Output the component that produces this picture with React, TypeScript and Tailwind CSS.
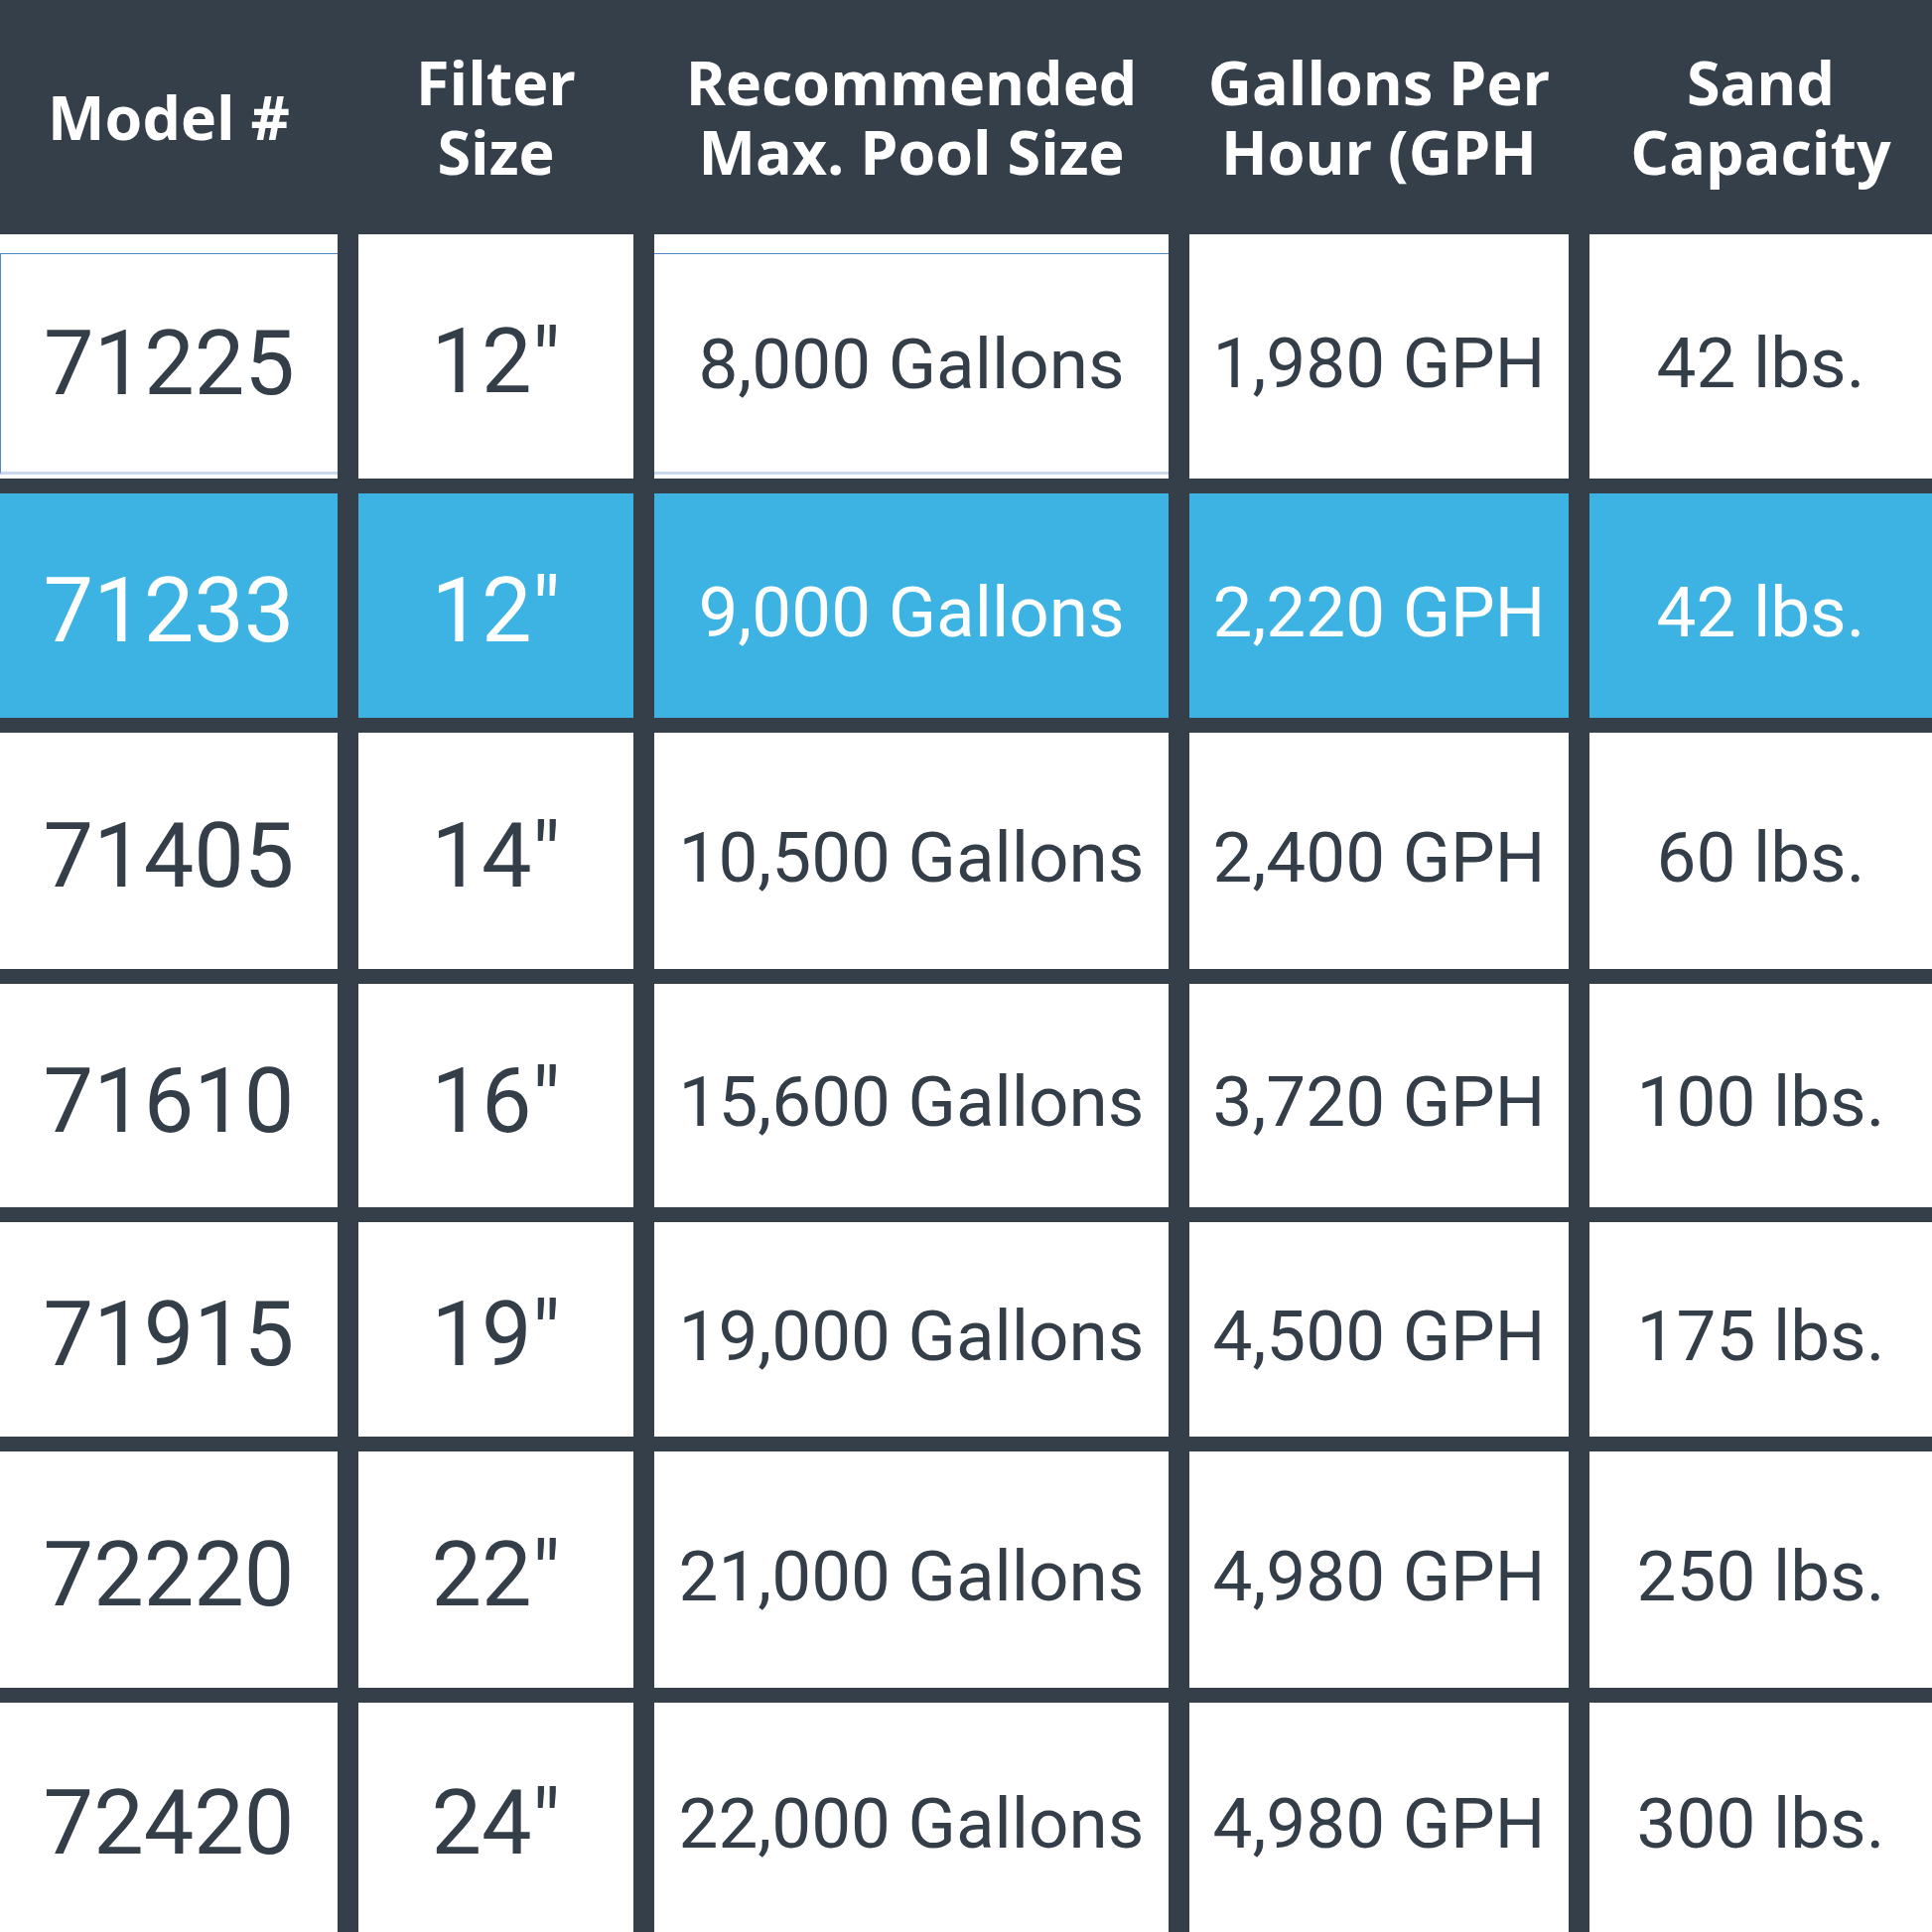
import React from "react";

type Row = { model: string; size: string; pool: string; gph: string; sand: string; hl?: boolean };

const rows: Row[] = [
  { model: "71225", size: "12\"", pool: "8,000 Gallons", gph: "1,980 GPH", sand: "42 lbs." },
  { model: "71233", size: "12\"", pool: "9,000 Gallons", gph: "2,220 GPH", sand: "42 lbs.", hl: true },
  { model: "71405", size: "14\"", pool: "10,500 Gallons", gph: "2,400 GPH", sand: "60 lbs." },
  { model: "71610", size: "16\"", pool: "15,600 Gallons", gph: "3,720 GPH", sand: "100 lbs." },
  { model: "71915", size: "19\"", pool: "19,000 Gallons", gph: "4,500 GPH", sand: "175 lbs." },
  { model: "72220", size: "22\"", pool: "21,000 Gallons", gph: "4,980 GPH", sand: "250 lbs." },
  { model: "72420", size: "24\"", pool: "22,000 Gallons", gph: "4,980 GPH", sand: "300 lbs." },
];

const valFont = { fontFamily: "Roboto, 'Noto Sans', sans-serif" };
const headFont = { fontFamily: "'Open Sans', 'Noto Sans', sans-serif" };

function Cell({ children, hl, big, extra }: { children: React.ReactNode; hl?: boolean; big?: boolean; extra?: string }) {
  return (
    <div className={`flex items-center justify-center ${hl ? "bg-[#3db3e4] text-white" : "bg-white text-[#333e48]"} ${extra ?? ""}`}>
      <span
        className={`${big ? "text-[90px]" : "text-[71px]"} leading-none whitespace-nowrap pt-[12px]`}
        style={valFont}
      >
        {children}
      </span>
    </div>
  );
}

function Head({ children }: { children: React.ReactNode }) {
  return <div className="flex flex-col items-center justify-center whitespace-nowrap">{children}</div>;
}

export default function App() {
  return (
    <div className="w-[1946px] h-[1946px] bg-[#343f4a] flex flex-col overflow-hidden">
      <div
        className="grid grid-cols-[340px_277px_518px_382px_345px] gap-x-[21px] h-[236px] text-white font-bold text-[61px] leading-[70px] text-center"
        style={headFont}
      >
        <Head><span>Model #</span></Head>
        <Head><span>Filter</span><span>Size</span></Head>
        <Head><span>Recommended</span><span>Max. Pool Size</span></Head>
        <Head><span>Gallons Per</span><span>Hour (GPH</span></Head>
        <Head><span>Sand</span><span>Capacity</span></Head>
      </div>
      <div className="grid grid-cols-[340px_277px_518px_382px_345px] grid-rows-[246px_226px_238px_225px_216px_238px_231px] gap-x-[21px] gap-y-[15px]">
        {rows.map((r, i) => (
          <React.Fragment key={r.model}>
            {i === 0 ? (
              <div className="bg-white flex flex-col pt-[19px] pb-[4px]">
                <div className="flex-1 flex items-center justify-center border-t border-b-[3px] border-b-[#c9d8ea] border-l border-t-[#4f86c6] border-l-[#4f86c6] text-[#333e48]">
                  <span className="text-[90px] leading-none whitespace-nowrap pt-[2px]" style={valFont}>{r.model}</span>
                </div>
              </div>
            ) : (
              <Cell hl={r.hl} big>{r.model}</Cell>
            )}
            <Cell hl={r.hl} big>{r.size}</Cell>
            {i === 0 ? (
              <div className="bg-white flex flex-col pt-[19px] pb-[4px]">
                <div className="flex-1 flex items-center justify-center border-t border-t-[#4f86c6] border-b-[3px] border-b-[#c9d8ea] text-[#333e48]">
                  <span className="text-[71px] leading-none whitespace-nowrap pt-[2px]" style={valFont}>{r.pool}</span>
                </div>
              </div>
            ) : (
              <Cell hl={r.hl}>{r.pool}</Cell>
            )}
            <Cell hl={r.hl}>{r.gph}</Cell>
            <Cell hl={r.hl}>{r.sand}</Cell>
          </React.Fragment>
        ))}
      </div>
    </div>
  );
}
